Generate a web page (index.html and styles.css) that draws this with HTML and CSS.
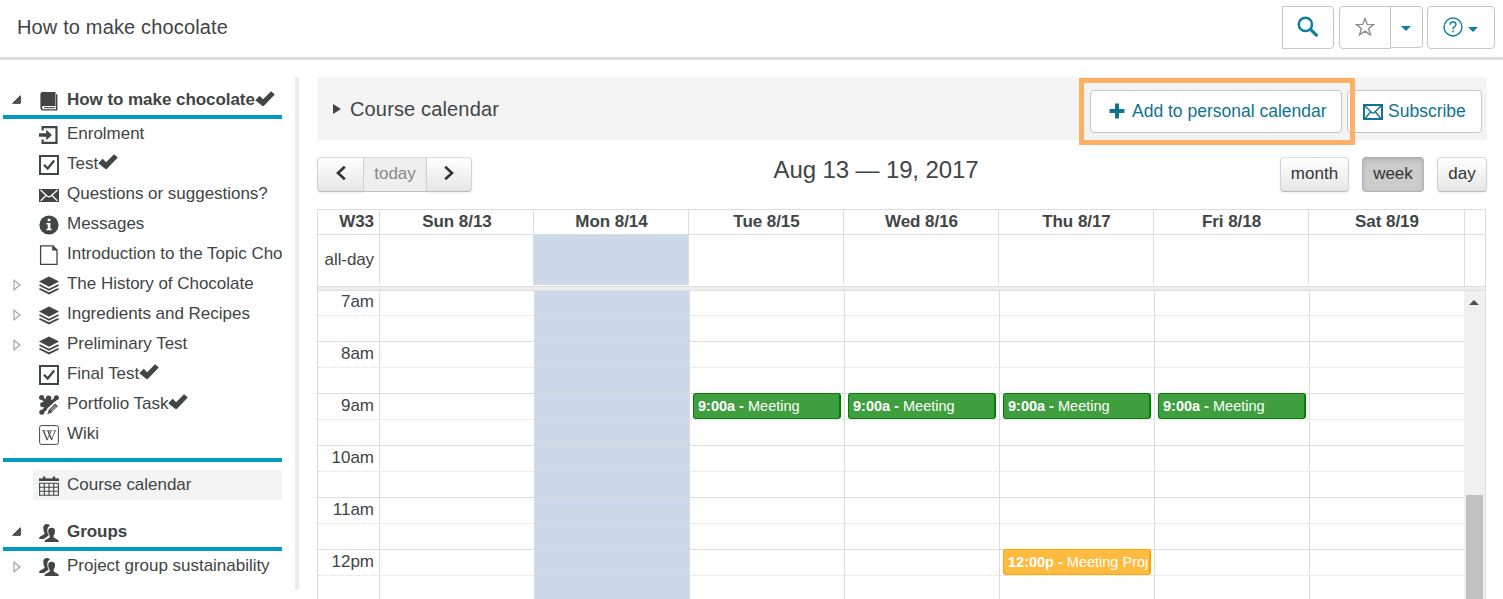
FILE: index.html
```html
<!DOCTYPE html>
<html lang="en">
<head>
<meta charset="utf-8">
<title>How to make chocolate</title>
<link rel="stylesheet" href="styles.css">
</head>
<body>
<svg class="defs" aria-hidden="true">
  <symbol id="check" viewBox="0 0 20 20"><path d="M.3 11.2 4.7 6.8 8.1 10.2 16 2.2 19.8 5.6 9.2 16.6Q8 17.8 6.8 16.6Z"/></symbol>
  <symbol id="book" viewBox="0 0 20 20"><path d="M3.5 1H16.5V15H4.2Q3 15.2 3 16.6 3 18 4.2 18.2H17V3.2H18.4V19.6H4Q1.4 19.4 1.4 16.5V3Q1.5 1.2 3.5 1Z"/><path d="M5 16.1H15.8V17.2H5Z"/></symbol>
  <symbol id="enter" viewBox="0 0 20 20"><path fill="none" stroke="currentColor" stroke-width="2.2" d="M3.6 5.5V2.1H17.5V17.9H3.6V14.5"/><path d="M0 8.2H7.2V4.8L13 10 7.2 15.2V11.8H0Z"/></symbol>
  <symbol id="checkbox" viewBox="0 0 20 20"><path fill="none" stroke="currentColor" stroke-width="2" d="M1 1H19V19H1Z"/><path fill="none" stroke="currentColor" stroke-width="2.3" d="M5 9.7 8.7 13.5 15.2 5.6"/></symbol>
  <symbol id="mail" viewBox="0 0 20 20"><path d="M0 4H20V17H0Z"/><path fill="none" stroke="#fff" stroke-width="1.3" d="M1.5 5 8.4 11.2Q10 12.4 11.6 11.2L18.5 5M1.7 15.8 7 10.5M18.3 15.8 13 10.5"/></symbol>
  <symbol id="mailo" viewBox="0 0 20 20"><path fill="none" stroke="currentColor" stroke-width="2" d="M1 3H19V17H1Z"/><path fill="none" stroke="currentColor" stroke-width="1.4" d="M2 4 8.7 10.6Q10 11.8 11.3 10.6L18 4M2.5 16 7.5 10M17.5 16 12.5 10"/></symbol>
  <symbol id="info" viewBox="0 0 20 20"><circle cx="10" cy="10" r="9.6"/><path fill="#fff" d="M8.7 3.7H11.4V6.2H8.7ZM7.4 8H11.4V13.8H12.7V15.3H7.4V13.8H8.8V9.5H7.4Z"/></symbol>
  <symbol id="page" viewBox="0 0 20 20"><path fill="none" stroke="currentColor" stroke-width="1.3" d="M1.6.9H14L18 5V19.4H1.6Z"/><path d="M13.2.7 18.4 5.6H13.2Z"/></symbol>
  <symbol id="layers" viewBox="0 0 20 20"><path d="M10 1.4 20 6.6 10 11.8 0 6.6Z"/><path fill="none" stroke="currentColor" stroke-width="1.8" d="M.5 10 10 14.7 19.5 10M.5 13.7 10 18.4 19.5 13.7"/></symbol>
  <symbol id="portfolio" viewBox="0 0 20 20"><circle cx="2.6" cy="2.6" r="2.5"/><circle cx="9.6" cy="3.4" r="2.8"/><circle cx="17.4" cy="2.8" r="2.5"/><circle cx="3.8" cy="9.6" r="2.6"/><circle cx="2.8" cy="17.2" r="2.5"/><path d="M3 5 5 3 8 5H13L16 2 18 4.6 15.4 7.4 16.6 10 8 15 5 17 2.6 15.6 5.2 12.6 4.8 7Z"/><path fill="#fff" d="M15.8 6.4 20 10.6V13.4L11.6 20H6.2L8.2 13.6Z"/><path d="M16.2 8.6 18.8 11.2 12.6 17.4 8.2 19.2 10 14.8Z"/><path fill="none" stroke="#fff" stroke-width=".8" d="M11.4 15.4 16.4 10.4M12.6 16.6 17.4 11.8"/></symbol>
  <symbol id="wiki" viewBox="0 0 20 20"><rect x=".6" y=".6" width="18.8" height="18.8" rx="1.8" fill="none" stroke="currentColor" stroke-width="1"/><path fill="none" stroke="currentColor" stroke-width="1.3" d="M4.6 6 8.1 14.8M9 6 12.7 14.8"/><path fill="none" stroke="currentColor" stroke-width=".8" d="M8 15.2 12 6M12.5 15.2 16 6M3 5.7H6.6M7.7 5.7H13M14.3 5.7H17.2"/></symbol>
  <symbol id="calendar" viewBox="0 0 20 20"><path d="M0 2.4H20V5H0Z"/><path d="M4 .4H6.4V4H4ZM13.8 .4H16.2V4H13.8Z"/><path fill="none" stroke="currentColor" stroke-width="1.1" d="M.6 7.3H19.4V19.2H.6ZM.6 11.3H19.4M.6 15.3H19.4M5.3 7.3V19M10 7.3V19M14.7 7.3V19"/></symbol>
  <symbol id="group" viewBox="0 0 20 20"><path d="M4.3 4.5Q4.5 1 8 1 10.3 1 11 2.6 8 4.2 8.3 8.2 8.5 11 9.8 12.4L4.7 16H0Q.2 13.5 2.2 12.8 5.8 11.8 5.6 10 4.3 8.2 4.3 4.5Z"/><path d="M9.2 8Q9.3 4.7 12.6 4.7 16 4.7 16 8 16 11.3 14.4 13 14.3 15.1 16.8 15.8 19.8 16.6 20 19H5.4Q5.6 16.6 8.6 15.8 11 15.1 10.9 13 9.2 11.3 9.2 8Z"/></symbol>
  <symbol id="closed" viewBox="0 0 8 12"><path fill="none" stroke="#a6a6a6" stroke-width="1.2" d="M1 1.2 7 6 1 10.8Z"/></symbol>
  <symbol id="open" viewBox="0 0 8 8"><path fill="#555" stroke="#333" stroke-width=".8" d="M.6 7.4 7.4.6V7.4Z"/></symbol>
</svg>

<header class="topbar">
  <h1 class="topbar-title">How to make chocolate</h1>
  <div class="tools">
    <button class="tool tool-search"><svg width="22" height="22" viewBox="0 0 22 22"><circle cx="8.4" cy="8.4" r="6.6" fill="none" stroke="currentColor" stroke-width="2.5"/><path d="M13.2 13.2 20.4 20.2" stroke="currentColor" stroke-width="3.2"/></svg></button>
    <div class="tool-group">
      <button class="tool tool-star"><svg width="20" height="20" viewBox="0 0 20 20"><path fill="none" stroke="#8d8d8d" stroke-width="1.4" d="M10 1.6 12.2 7.4 18.6 7.6 13.6 11.5 15.4 17.8 10 14.2 4.6 17.8 6.4 11.5 1.4 7.6 7.8 7.4Z"/></svg></button>
      <button class="tool tool-drop"><span class="caret"></span></button>
    </div>
    <button class="tool tool-help"><svg width="20" height="20" viewBox="0 0 20 20"><circle cx="10" cy="10" r="9" fill="none" stroke="currentColor" stroke-width="1.4"/><path fill="none" stroke="currentColor" stroke-width="1.4" d="M7 7.8Q7.1 5 10 5 13 5 13 7.5 13 8.8 11.3 9.8 10 10.7 10 12.2M10 13.6V15.3"/></svg><span class="caret"></span></button>
  </div>
</header>

<div class="page">
  <nav class="sidebar">
    <div class="node head"><svg class="arrow open"><use href="#open"/></svg><svg class="icon"><use href="#book"/></svg><span class="label">How to make chocolate</span><svg class="tick"><use href="#check"/></svg></div>
    <div class="node"><svg class="icon"><use href="#enter"/></svg><span class="label">Enrolment</span></div>
    <div class="node"><svg class="icon"><use href="#checkbox"/></svg><span class="label">Test</span><svg class="tick"><use href="#check"/></svg></div>
    <div class="node"><svg class="icon"><use href="#mail"/></svg><span class="label">Questions or suggestions?</span></div>
    <div class="node"><svg class="icon"><use href="#info"/></svg><span class="label">Messages</span></div>
    <div class="node"><svg class="icon"><use href="#page"/></svg><span class="label">Introduction to the Topic Cho</span></div>
    <div class="node"><svg class="arrow"><use href="#closed"/></svg><svg class="icon"><use href="#layers"/></svg><span class="label">The History of Chocolate</span></div>
    <div class="node"><svg class="arrow"><use href="#closed"/></svg><svg class="icon"><use href="#layers"/></svg><span class="label">Ingredients and Recipes</span></div>
    <div class="node"><svg class="arrow"><use href="#closed"/></svg><svg class="icon"><use href="#layers"/></svg><span class="label">Preliminary Test</span></div>
    <div class="node"><svg class="icon"><use href="#checkbox"/></svg><span class="label">Final Test</span><svg class="tick"><use href="#check"/></svg></div>
    <div class="node"><svg class="icon"><use href="#portfolio"/></svg><span class="label">Portfolio Task</span><svg class="tick"><use href="#check"/></svg></div>
    <div class="node"><svg class="icon"><use href="#wiki"/></svg><span class="label">Wiki</span></div>
    <div class="rule"></div>
    <div class="node selected"><svg class="icon"><use href="#calendar"/></svg><span class="label">Course calendar</span></div>
    <div class="node head groups"><svg class="arrow open"><use href="#open"/></svg><svg class="icon"><use href="#group"/></svg><span class="label">Groups</span></div>
    <div class="node"><svg class="arrow"><use href="#closed"/></svg><svg class="icon"><use href="#group"/></svg><span class="label">Project group sustainability</span></div>
  </nav>

  <main class="main">
    <section class="banner">
      <svg class="banner-arrow" width="8" height="10" viewBox="0 0 8 10"><path d="M0 0 8 5 0 10Z"/></svg>
      <h2 class="banner-title">Course calendar</h2>
      <div class="add-wrap">
        <button class="btn btn-add"><svg width="16" height="16" viewBox="0 0 16 16"><path d="M6 .5H10V6H15.5V10H10V15.5H6V10H.5V6H6Z"/></svg><span>Add to personal calendar</span></button>
        <div class="highlight"></div>
      </div>
      <button class="btn btn-sub"><svg width="20" height="20"><use href="#mailo"/></svg><span>Subscribe</span></button>
    </section>

    <section class="toolbar">
      <div class="pager">
        <button class="fc prev"><svg width="10" height="16" viewBox="0 0 10 16"><path d="M8.8 1.8 2 8 8.8 14.2"/></svg></button>
        <button class="fc today">today</button>
        <button class="fc next"><svg width="10" height="16" viewBox="0 0 10 16"><path d="M1.2 1.8 8 8 1.2 14.2"/></svg></button>
      </div>
      <h2 class="range">Aug 13 — 19, 2017</h2>
      <div class="views">
        <button class="fc month">month</button>
        <button class="fc week">week</button>
        <button class="fc day">day</button>
      </div>
    </section>

    <section class="calendar">
      <div class="row days">
        <div class="axis">W33</div><div>Sun 8/13</div><div>Mon 8/14</div><div>Tue 8/15</div><div>Wed 8/16</div><div>Thu 8/17</div><div>Fri 8/18</div><div>Sat 8/19</div><div></div>
      </div>
      <div class="row allday">
        <div class="axis">all-day</div><div></div><div class="now"></div><div></div><div></div><div></div><div></div><div></div><div class="gutter"></div>
      </div>
      <div class="divider"></div>
      <div class="body">
        <div class="times">
          <div class="layer cols back"><i></i><i></i><i class="now"></i><i></i><i></i><i></i><i></i><i></i></div>
          <div class="layer slots">
            <div class="slot half first">7am</div><div class="slot"></div>
            <div class="slot half">8am</div><div class="slot"></div>
            <div class="slot half">9am</div><div class="slot"></div>
            <div class="slot half">10am</div><div class="slot"></div>
            <div class="slot half">11am</div><div class="slot"></div>
            <div class="slot half">12pm</div><div class="slot"></div>
          </div>
          <div class="layer cols front">
            <div></div><div></div><div></div>
            <div class="line"><div class="event"><b>9:00a - </b>Meeting</div></div>
            <div class="line"><div class="event"><b>9:00a - </b>Meeting</div></div>
            <div class="line"><div class="event"><b>9:00a - </b>Meeting</div><div class="event noon"><b>12:00p - </b>Meeting Proj</div></div>
            <div class="line"><div class="event"><b>9:00a - </b>Meeting</div></div>
            <div class="line"></div>
          </div>
        </div>
        <div class="scroll"><span class="up"></span><span class="thumb"></span></div>
      </div>
    </section>
  </main>
</div>
</body>
</html>
```
FILE: styles.css
```css
* { box-sizing: border-box; }
body {
  margin: 0;
  height: 599px;
  overflow: hidden;
  background: #fff;
  color: #404545;
  font: 17px/30px "Liberation Sans", Arial, sans-serif;
}
h1, h2 { margin: 0; font-weight: normal; }
button { margin: 0; padding: 0; font: inherit; }
svg { display: block; fill: currentColor; }
.defs { position: absolute; width: 0; height: 0; }

.topbar {
  display: flex;
  justify-content: space-between;
  height: 60px;
  padding: 6px 8px 0 17px;
  border-bottom: 3px solid #ddd;
}
.topbar-title { font-size: 20px; line-height: 42px; letter-spacing: .15px; }
.tools { display: flex; align-items: flex-start; }
.tool {
  display: flex;
  align-items: center;
  justify-content: center;
  height: 43px;
  border: 1px solid #c6c6c6;
  background: #fff;
  color: #0f7f9b;
}
.tool-search { width: 52px; margin-right: 5px; border-radius: 0 4px 4px 0; }
.tool-search svg { margin-bottom: 2px; }
.tool-group { display: flex; align-items: flex-start; margin-right: 4px; }
.tool-star { width: 52px; border-radius: 4px 0 0 4px; }
.tool-star svg { margin-bottom: 1px; }
.tool-drop { width: 33px; height: 42px; margin-left: -1px; padding-right: 2px; border-radius: 0 4px 4px 0; }
.tool-help { width: 68px; padding-right: 1px; border-radius: 4px; gap: 5px; }
.tool-help svg { margin-bottom: 2px; }
.caret { border: 5px solid transparent; border-top-color: #0f7f9b; border-bottom: 0; margin-top: 3px; }

.page { display: flex; }
.sidebar {
  width: 299px;
  height: 513px;
  margin-top: 17px;
  padding: 8px 13px 0 3px;
  border-right: 4px solid #ececec;
}
.node {
  display: flex;
  align-items: center;
  width: 279px;
  height: 30px;
  padding-left: 36px;
  overflow: hidden;
  white-space: nowrap;
}
.label { margin-left: 8px; line-height: 28px; margin-bottom: 1px; letter-spacing: -.02px; }
.icon { flex: none; width: 20px; height: 20px; margin-top: 1px; }
.arrow { flex: none; width: 8px; height: 12px; margin: 1px 18px 0 -26px; }
.arrow.open { width: 9px; height: 9px; margin: 0 18px 1px -27px; }
.tick { flex: none; width: 20px; height: 20px; margin-bottom: 4px; }
.node.head { height: 34px; border-bottom: 4px solid #009bbe; font-weight: bold; }
.head .label { margin-bottom: 0; letter-spacing: -.05px; }
.head .tick { margin-bottom: 3px; }
.rule { height: 4px; margin: 9px 0 8px; background: #009bbe; }
.selected { width: 249px; margin-left: 30px; padding-left: 6px; background: #f4f4f4; }
.groups { margin-top: 17px; }

.main { width: 1170px; margin: 17px 0 0 18px; }
.banner {
  display: flex;
  align-items: flex-start;
  height: 63px;
  padding: 13px 5px 0 16px;
  background: #f4f4f4;
}
.banner-arrow { margin-top: 14px; }
.banner-title { flex: 1; margin-left: 9px; font-size: 20px; line-height: 39px; letter-spacing: .15px; }
.add-wrap { position: relative; margin-right: 5px; }
.btn {
  display: flex;
  align-items: center;
  height: 43px;
  border: 1px solid #c6c6c6;
  border-radius: 4px;
  background: #fff;
  color: #0f7391;
  font-size: 17.5px;
  white-space: nowrap;
}
.btn span { margin-bottom: 1px; }
.btn-add { width: 252px; padding-left: 18px; gap: 7px; }
.btn-add svg { margin-bottom: 2px; }
.btn-sub { width: 135px; padding-left: 15px; gap: 5px; }
.highlight {
  position: absolute;
  z-index: 2;
  left: -11px;
  top: -12px;
  width: 276px;
  height: 67px;
  border: 5px solid #ffb066;
}

.toolbar { display: flex; justify-content: space-between; margin-top: 17px; height: 52px; }
.pager { display: flex; }
.views { display: flex; justify-content: flex-end; }
.fc {
  display: flex;
  align-items: center;
  justify-content: center;
  height: 35px;
  padding-bottom: 2px;
  border: 1px solid;
  border-color: #dcdcdc #d0d0d0 #bbb;
  border-radius: 4px;
  background: linear-gradient(#fff, #e6e6e6);
  box-shadow: 0 1px 2px rgba(0, 0, 0, .08);
  color: #333;
  line-height: 20px;
}
.fc svg { fill: none; stroke: #333; stroke-width: 2.6; margin-bottom: 1px; }
.prev { width: 47px; border-radius: 4px 0 0 4px; }
.today { width: 64px; margin-left: -1px; border-radius: 0; background: #efefef; color: #888; box-shadow: none; }
.next { width: 46px; margin-left: -1px; border-radius: 0 4px 4px 0; }
.month { width: 69px; }
.week { width: 62px; margin: 0 13px; background: #ccc; border-color: #aaa #b5b5b5 #b5b5b5; box-shadow: inset 0 2px 4px rgba(0, 0, 0, .15); }
.day { width: 50px; }
.range { font-size: 24px; line-height: 26px; letter-spacing: -.12px; }

.calendar { width: 1169px; height: 390px; border: 1px solid #ddd; border-bottom: 0; }
.row { display: grid; grid-template-columns: 61px 154px repeat(5, 155px) 156px 1fr; }
.row > div + div { border-left: 1px solid #ddd; }
.days { height: 24px; font-weight: bold; line-height: 24px; text-align: center; letter-spacing: -.05px; }
.days > div + div { padding-left: 1px; }
.days .axis, .allday .axis { padding-right: 5px; text-align: right; }
.allday { height: 52px; border-top: 1px solid #ddd; }
.allday > div { height: 50px; line-height: 49px; letter-spacing: -.1px; }
.allday .gutter { height: 51px; }
.now { background: #cdd9e9; }
.divider { height: 5px; border: 1px solid #ddd; border-width: 1px 0; background: #eee; }
.body { display: flex; height: 310px; overflow: hidden; }
.times { display: grid; width: 1146px; }
.layer { grid-area: 1 / 1; }
.cols { display: grid; grid-template-columns: 61px repeat(7, 155px); }
.back i + i { border-left: 1px solid #ddd; }
.slot { height: 26px; border-bottom: 1px solid #ddd; line-height: 23px; }
.half { border-bottom-style: dotted; display: grid; grid-template-columns: 56px; text-align: right; }
.slot.first { height: 25px; line-height: 21px; }
.event {
  width: 148px;
  height: 26px;
  margin: 102px 0 0 4px;
  padding-left: 4px;
  overflow: hidden;
  border: 1px solid green;
  border-right-width: 2px;
  border-radius: 3px;
  background: #3f9f3f;
  color: #fff;
  font-size: 14.5px;
  line-height: 25px;
  white-space: pre;
}
.event + .event { margin-top: 130px; }
.noon { border-color: orange; background: #ffba40; }
.scroll { display: flex; flex-direction: column; width: 21px; padding: 9px 0 0 2px; background: #f0f0f0; }
.up { width: 10px; margin-left: 3px; border: 5px solid transparent; border-top: 0; border-bottom-color: #505050; }
.thumb { width: 17px; height: 110px; margin-top: 190px; background: #c1c1c1; }
```
